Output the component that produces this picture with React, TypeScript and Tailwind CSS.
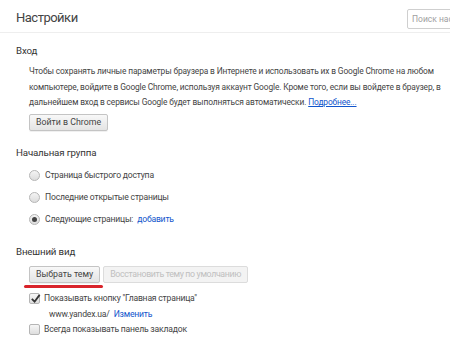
import React from "react";

const Radio = ({ checked }: { checked?: boolean }) => (
  <span className="flex h-[11px] w-[11px] shrink-0 items-center justify-center rounded-full border border-[#b5b5b5] bg-gradient-to-b from-[#f4f4f4] to-[#dcdcdc]">
    {checked && <span className="h-[5px] w-[5px] rounded-full bg-[#444]" />}
  </span>
);

const Checkbox = ({ checked }: { checked?: boolean }) => (
  <span className="relative flex h-[11px] w-[11px] shrink-0 items-center justify-center rounded-[2px] border border-[#b5b5b5] bg-gradient-to-b from-[#f6f6f6] to-[#dedede]">
    {checked && (
      <svg viewBox="0 0 12 12" className="absolute -top-[1px] left-[0px] h-[11px] w-[11px]">
        <path d="M2 6.5 L5 9.5 L10.5 2" fill="none" stroke="#333" strokeWidth="2" />
      </svg>
    )}
  </span>
);

const Button = ({ children, disabled }: { children: React.ReactNode; disabled?: boolean }) => (
  <button
    className={`h-[17px] whitespace-nowrap rounded-[2px] border px-[6px] text-[8.8px] leading-none ${
      disabled
        ? "border-[#dcdcdc] bg-[#f3f3f3] tracking-[-0.35px] text-[#c0c0c0]"
        : "border-[#c4c4c4] bg-gradient-to-b from-[#f8f8f8] to-[#e4e4e4] text-[#444] shadow-[0_1px_0_rgba(0,0,0,0.06)]"
    }`}
  >
    {children}
  </button>
);

export default function App() {
  return (
    <div className="relative h-[353px] w-[450px] overflow-hidden bg-white font-['Roboto',sans-serif] text-[#333]">
      <div className="flex h-[33px] items-start border-b border-[#eeeeee] pl-[16px]">
        <h1 className="mt-[8px] text-[13px] leading-[20px] tracking-[-0.5px] text-[#444]">Настройки</h1>
        <input
          className="ml-auto mr-[-20px] mt-[9px] h-[20px] w-[63px] rounded-[2px] border border-[#cfcfcf] px-[4px] text-[8.5px] text-[#999] outline-none placeholder:text-[#a0a0a0]"
          placeholder="Поиск настроек"
        />
      </div>

      <div className="pl-[16px]">
        <h2 className="mt-[11px] text-[9.7px] leading-[14px] tracking-[-0.15px]">Вход</h2>
        <div className="pl-[13px]">
          <p className="mt-[6px] whitespace-nowrap text-[8.4px] leading-[15.5px] tracking-[-0.13px] text-[#444]">
            Чтобы сохранять личные параметры браузера в Интернете и использовать их в Google Chrome на любом
            <br />
            компьютере, войдите в Google Chrome, используя аккаунт Google. Кроме того, если вы войдете в браузер, в
            <br />
            дальнейшем вход в сервисы Google будет выполняться автоматически.{" "}
            <a className="text-[#1155cc] underline">Подробнее...</a>
          </p>
          <div className="mt-[3px] flex">
            <Button>Войти в Chrome</Button>
          </div>
        </div>

        <h2 className="mt-[15px] text-[9.7px] leading-[14px] tracking-[-0.15px]">Начальная группа</h2>
        <div className="mt-[9px] flex flex-col gap-[8px] pl-[13px] text-[8.6px] tracking-[-0.2px] text-[#444]">
          <label className="flex h-[14px] items-center gap-[5px]">
            <Radio />
            Страница быстрого доступа
          </label>
          <label className="flex h-[14px] items-center gap-[5px]">
            <Radio />
            Последние открытые страницы
          </label>
          <label className="flex h-[14px] items-center gap-[5px]">
            <Radio checked />
            <span>
              Следующие страницы: <a className="ml-[2px] text-[#1155cc]">добавить</a>
            </span>
          </label>
        </div>

        <h2 className="mt-[18px] text-[9.7px] leading-[14px] tracking-[-0.15px]">Внешний вид</h2>
        <div className="mt-[7px] pl-[13px]">
          <div className="flex gap-[3px]">
            <Button>Выбрать тему</Button>
            <Button disabled>Восстановить тему по умолчанию</Button>
          </div>
          <div className="-ml-[5px] mt-[2px] h-[3px] w-[79px] rounded-full bg-[#d9232a]" />
          <label className="mt-[4px] flex h-[14px] items-center gap-[4px] text-[8.6px] tracking-[-0.2px] text-[#444]">
            <Checkbox checked />
            Показывать кнопку "Главная страница"
          </label>
          <div className="mt-[2px] flex h-[14px] items-center gap-[4px] pl-[20px] text-[8.6px] tracking-[-0.2px] text-[#444]">
            www.yandex.ua/ <a className="text-[#1155cc]">Изменить</a>
          </div>
          <label className="mt-[1px] flex h-[14px] items-center gap-[4px] text-[8.6px] tracking-[-0.2px] text-[#444]">
            <Checkbox />
            Всегда показывать панель закладок
          </label>
        </div>
      </div>
    </div>
  );
}
